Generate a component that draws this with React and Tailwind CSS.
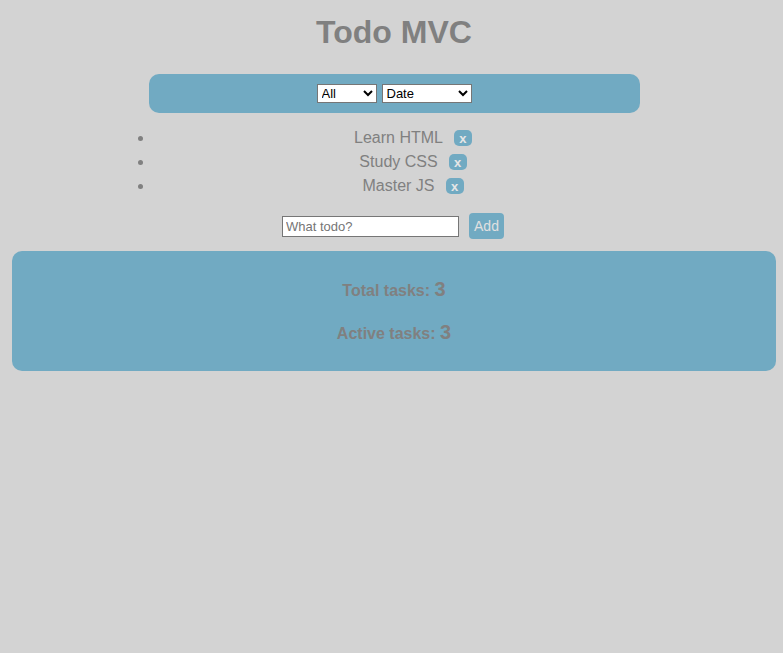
import { useState } from 'react';

const todos = [
  { id: 1, text: 'Learn HTML' },
  { id: 2, text: 'Study CSS' },
  { id: 3, text: 'Master JS' },
];

export default function App() {
  const [items] = useState(todos);

  return (
    <div className="min-h-screen bg-[#d3d3d3] text-[#808080] font-['Liberation_Sans',Arial,sans-serif]">
      <div className="ml-[12px] mr-[7px] pt-[14px]">
        <h1 className="text-center text-[32px] leading-[37px] font-bold">Todo MVC</h1>

        <div className="mx-auto mt-[23px] flex h-[39px] w-[491px] items-center justify-center gap-[5px] rounded-[10px] bg-[#71aac2]">
          <select className="h-[19px] w-[60px] border border-[#767676] bg-white text-[13px] text-black">
            <option>All</option>
            <option>Active</option>
            <option>Completed</option>
          </select>
          <select className="h-[19px] w-[90px] border border-[#767676] bg-white text-[13px] text-black">
            <option>Date</option>
            <option>Name</option>
          </select>
        </div>

        <ul className="mx-auto mt-[13px] mb-[15px] w-[556px] list-disc pl-[38px]">
          {items.map(t => (
            <li key={t.id} className="text-[16px] leading-[24px]">
              <div className="flex h-[24px] items-center justify-center gap-[11px]">
                <span>{t.text}</span>
                <button className="flex h-[16px] w-[18px] items-center justify-center rounded-[5px] bg-[#71aac2] text-[13px] font-bold leading-none text-[#e6e6e6]">
                  x
                </button>
              </div>
            </li>
          ))}
        </ul>

        <form className="flex items-center justify-center gap-[10px] pr-[2px]" onSubmit={e => e.preventDefault()}>
          <input
            placeholder="What todo?"
            className="h-[21px] w-[177px] border border-[#767676] bg-white px-[3px] text-[13px] text-black placeholder:text-[#757575]"
          />
          <button className="h-[26px] w-[35px] rounded-[4px] bg-[#71aac2] text-[14px] text-[#e0e0e0]">Add</button>
        </form>

        <div className="mt-[12px] flex h-[120px] flex-col items-center justify-center gap-[19px] rounded-[10px] bg-[#71aac2] font-bold">
          <p className="text-[16px] leading-[23px]">
            Total tasks: <span className="text-[20px]">{items.length}</span>
          </p>
          <p className="text-[16px] leading-[23px]">
            Active tasks: <span className="text-[20px]">{items.length}</span>
          </p>
        </div>
      </div>
    </div>
  );
}
